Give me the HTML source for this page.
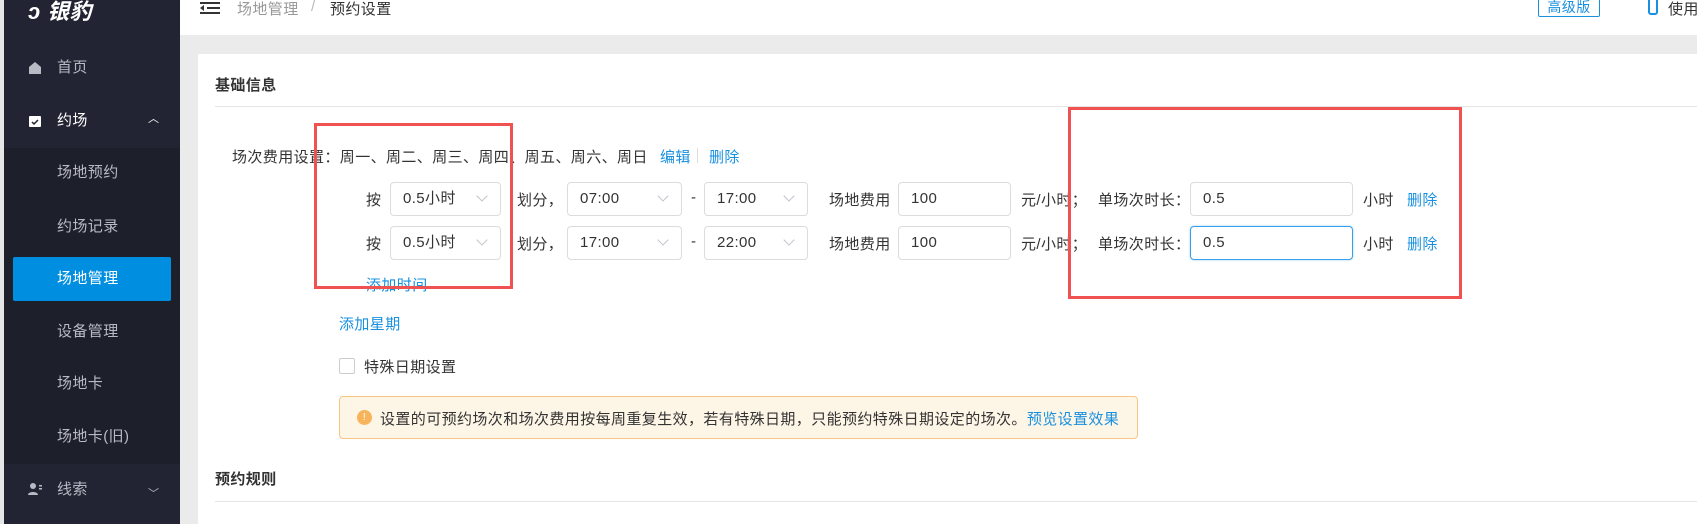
<!DOCTYPE html>
<html><head><meta charset="utf-8"><style>
*{margin:0;padding:0;box-sizing:border-box}
body{width:1697px;height:524px;overflow:hidden;background:#ebebeb;font-family:"Liberation Sans","Noto Sans CJK SC",sans-serif;font-size:15px;letter-spacing:0.4px;color:#333;position:relative}
.a{position:absolute;white-space:nowrap}
.side{position:absolute;left:0;top:0;width:180px;height:524px;background:#222433;border-left:4px solid #e6e6e6}
.sub{position:absolute;left:4px;top:148px;width:176px;height:316px;background:#1d1f2b}
.mi{position:absolute;color:#b8bac4;font-size:15px;line-height:20px}
.blue{color:#1890e0}
.sel,.inp{position:absolute;border:1px solid #dcdcdc;border-radius:4px;background:#fff;height:34px;line-height:32px;padding-left:12px;color:#333}
.sel:after{content:"";position:absolute;right:14px;top:9px;width:7px;height:7px;border-right:1px solid #c0c4cc;border-bottom:1px solid #c0c4cc;transform:rotate(45deg)}
.red{position:absolute;border:3px solid #f05252}
</style></head><body>
<div class="side"></div>
<div class="sub"></div>
<div class="a" style="left:28px;top:-6px;color:#fff;font-size:22px;font-weight:bold;font-style:italic">ↄ 银豹</div>
<svg class="a" style="left:28px;top:61px" width="14" height="14" viewBox="0 0 14 14"><path d="M7 1L1 6v7h12V6z" fill="#b8bac4"/></svg>
<div class="mi" style="left:57px;top:58px">首页</div>
<svg class="a" style="left:28px;top:114px" width="14" height="14" viewBox="0 0 14 14"><rect x="1" y="2" width="12" height="11" rx="1" fill="#fff"/><path d="M4 8l2 2 4-4" stroke="#222433" stroke-width="1.5" fill="none"/></svg>
<div class="mi" style="left:57px;top:111px;color:#fff">约场</div>
<div class="mi" style="left:148px;top:109px;color:#fff;font-size:11px">︿</div>
<div class="mi" style="left:57px;top:163px">场地预约</div>
<div class="mi" style="left:57px;top:217px">约场记录</div>
<div class="a" style="left:13px;top:257px;width:158px;height:44px;background:#008ee0;border-radius:2px"></div>
<div class="mi" style="left:57px;top:269px;color:#fff">场地管理</div>
<div class="mi" style="left:57px;top:322px">设备管理</div>
<div class="mi" style="left:57px;top:374px">场地卡</div>
<div class="mi" style="left:57px;top:427px">场地卡(旧)</div>
<svg class="a" style="left:28px;top:482px" width="15" height="14" viewBox="0 0 15 14"><circle cx="5" cy="4" r="3" fill="#b8bac4"/><path d="M0 13c0-4 10-4 10 0z" fill="#b8bac4"/><rect x="11" y="3" width="3" height="1.5" fill="#b8bac4"/><rect x="11" y="6" width="3" height="1.5" fill="#b8bac4"/></svg>
<div class="mi" style="left:57px;top:480px">线索</div>
<div class="mi" style="left:148px;top:484px;font-size:11px">﹀</div>

<div class="a" style="left:180px;top:0;width:1517px;height:35px;background:#fff"></div>
<svg class="a" style="left:200px;top:2px" width="20" height="12" viewBox="0 0 20 12"><path d="M0 1h20M7 6h13M0 11h20" stroke="#333" stroke-width="2"/><path d="M0 6l4-3v6z" fill="#333"/></svg>
<div class="a" style="left:237px;top:-2px;color:#999">场地管理</div>
<div class="a" style="left:311px;top:-2px;color:#bbb">/</div>
<div class="a" style="left:330px;top:-2px;color:#333">预约设置</div>
<div class="a" style="left:1538px;top:-2px;width:62px;height:19px;border:1px solid #1890e0;border-radius:2px;color:#1890e0;font-size:14px;line-height:17px;text-align:center">高级版</div>
<div class="a" style="left:1648px;top:-4px;width:10px;height:19px;border:2px solid #1890e0;border-radius:3px"></div>
<div class="a" style="left:1668px;top:-2px">使用</div>

<div class="a" style="left:198px;top:54px;width:1499px;height:470px;background:#fff"></div>
<div class="a" style="left:215px;top:74px;font-weight:bold">基础信息</div>
<div class="a" style="left:215px;top:106px;width:1482px;height:1px;background:#e6e6e6"></div>
<div class="a" style="left:232px;top:146px">场次费用设置：周一、周二、周三、周四、周五、周六、周日</div>
<div class="a blue" style="left:660px;top:146px">编辑</div>
<div class="a" style="left:697px;top:148px;width:1px;height:15px;background:#ddd"></div>
<div class="a blue" style="left:709px;top:146px">删除</div>

<div class="a" style="left:366px;top:189px">按</div>
<div class="sel" style="left:390px;top:182px;width:111px">0.5小时</div>
<div class="a" style="left:517px;top:189px">划分，</div>
<div class="sel" style="left:567px;top:182px;width:115px">07:00</div>
<div class="a" style="left:691px;top:189px">-</div>
<div class="sel" style="left:704px;top:182px;width:104px">17:00</div>
<div class="a" style="left:829px;top:189px">场地费用</div>
<div class="inp" style="left:898px;top:182px;width:113px">100</div>
<div class="a" style="left:1021px;top:189px">元/小时；</div>
<div class="a" style="left:1098px;top:189px">单场次时长：</div>
<div class="inp" style="left:1190px;top:182px;width:163px">0.5</div>
<div class="a" style="left:1363px;top:189px">小时</div>
<div class="a blue" style="left:1407px;top:189px">删除</div>

<div class="a" style="left:366px;top:233px">按</div>
<div class="sel" style="left:390px;top:226px;width:111px">0.5小时</div>
<div class="a" style="left:517px;top:233px">划分，</div>
<div class="sel" style="left:567px;top:226px;width:115px">17:00</div>
<div class="a" style="left:691px;top:233px">-</div>
<div class="sel" style="left:704px;top:226px;width:104px">22:00</div>
<div class="a" style="left:829px;top:233px">场地费用</div>
<div class="inp" style="left:898px;top:226px;width:113px">100</div>
<div class="a" style="left:1021px;top:233px">元/小时；</div>
<div class="a" style="left:1098px;top:233px">单场次时长：</div>
<div class="inp" style="left:1190px;top:226px;width:163px;border-color:#3a9ee8;box-shadow:0 0 2px #9cd0f5">0.5</div>
<div class="a" style="left:1363px;top:233px">小时</div>
<div class="a blue" style="left:1407px;top:233px">删除</div>

<div class="a blue" style="left:366px;top:274px">添加时间</div>
<div class="a blue" style="left:339px;top:313px">添加星期</div>
<div class="a" style="left:339px;top:358px;width:16px;height:16px;border:1px solid #ccc;border-radius:2px"></div>
<div class="a" style="left:364px;top:356px">特殊日期设置</div>
<div class="a" style="left:339px;top:396px;width:799px;height:43px;background:#fdf5e6;border:1px solid #f7c686;border-radius:4px"></div>
<div class="a" style="left:357px;top:410px;width:15px;height:15px;border-radius:50%;background:#f7b45a;color:#fff;font-size:10px;line-height:15px;text-align:center">!</div>
<div class="a" style="left:380px;top:408px">设置的可预约场次和场次费用按每周重复生效，若有特殊日期，只能预约特殊日期设定的场次。<span class="blue">预览设置效果</span></div>
<div class="a" style="left:215px;top:468px;font-weight:bold">预约规则</div>
<div class="a" style="left:215px;top:501px;width:1482px;height:1px;background:#e6e6e6"></div>

<div class="red" style="left:314px;top:123px;width:199px;height:166px"></div>
<div class="red" style="left:1068px;top:107px;width:394px;height:192px"></div>
</body></html>
